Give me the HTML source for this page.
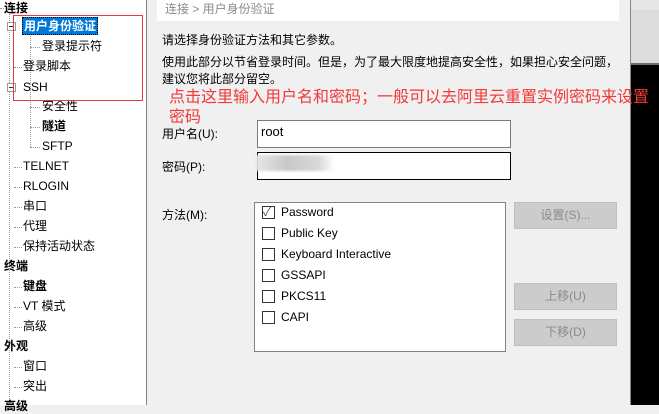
<!DOCTYPE html>
<html><head><meta charset="utf-8"><style>
*{margin:0;padding:0;box-sizing:border-box}
body{width:659px;height:405px;overflow:hidden;background:#f0f0f0;font-family:"Liberation Sans","Microsoft YaHei","Noto Sans CJK SC",sans-serif;font-size:12px;color:#000;position:relative}
.a{position:absolute;white-space:nowrap}
#left{position:absolute;left:0;top:0;width:147px;height:405px;background:#fff;border-right:1px solid #828282}
.t{position:absolute;white-space:nowrap;font-size:12px;line-height:16px}
.dh{position:absolute;border-top:1px dotted #999;height:0}
.dv{position:absolute;border-left:1px dotted #999;width:0}
.pm{position:absolute;width:9px;height:9px;border:1px solid #999;background:#fff}
.pm:after{content:"";position:absolute;left:1px;top:3px;width:5px;height:1px;background:#333}
.inp{position:absolute;background:#fff;border:1px solid #7a7a7a}
.cb{position:absolute;width:13px;height:13px;border:1px solid #333;background:#fff}
.btn{position:absolute;width:103px;height:27px;background:#ccc;border:1px solid #bfbfbf;color:#8a8a8a;text-align:center;line-height:25px;font-size:12px}
.red{color:#f03a3a;font-size:16px;line-height:20px;z-index:5}
</style></head><body>
<div id="left">
<div class="dv" style="left:9px;top:14px;height:391px"></div>
<div class="dh" style="left:0;top:8px;width:4px"></div>
<div class="t" style="left:4px;top:0px;font-weight:bold">连接</div>
<div class="dv" style="left:30px;top:32px;height:115px"></div>
<div class="pm" style="left:7px;top:22px"></div>
<div class="a" style="left:22px;top:17px;width:76px;height:18px;background:#0078d7;border:1px dotted #000"></div>
<div class="t" style="left:24px;top:18px;color:#fff;font-weight:bold">用户身份验证</div>
<div class="dh" style="left:30px;top:47px;width:10px"></div>
<div class="t" style="left:42px;top:38px">登录提示符</div>
<div class="dh" style="left:14px;top:67px;width:8px"></div>
<div class="t" style="left:23px;top:58px">登录脚本</div>
<div class="pm" style="left:7px;top:83px"></div>
<div class="t" style="left:23px;top:79px">SSH</div>
<div class="dh" style="left:30px;top:107px;width:10px"></div>
<div class="t" style="left:42px;top:98px">安全性</div>
<div class="dh" style="left:30px;top:127px;width:10px"></div>
<div class="t" style="left:42px;top:118px;font-weight:bold">隧道</div>
<div class="dh" style="left:30px;top:147px;width:10px"></div>
<div class="t" style="left:42px;top:138px">SFTP</div>
<div class="dh" style="left:14px;top:167px;width:8px"></div><div class="t" style="left:23px;top:158px">TELNET</div>
<div class="dh" style="left:14px;top:187px;width:8px"></div><div class="t" style="left:23px;top:178px">RLOGIN</div>
<div class="dh" style="left:14px;top:207px;width:8px"></div><div class="t" style="left:23px;top:198px">串口</div>
<div class="dh" style="left:14px;top:227px;width:8px"></div><div class="t" style="left:23px;top:218px">代理</div>
<div class="dh" style="left:14px;top:247px;width:8px"></div><div class="t" style="left:23px;top:238px">保持活动状态</div>
<div class="t" style="left:4px;top:258px;font-weight:bold">终端</div>
<div class="dh" style="left:14px;top:287px;width:8px"></div><div class="t" style="left:23px;top:278px;font-weight:bold">键盘</div>
<div class="dh" style="left:14px;top:307px;width:8px"></div><div class="t" style="left:23px;top:298px">VT 模式</div>
<div class="dh" style="left:14px;top:327px;width:8px"></div><div class="t" style="left:23px;top:318px">高级</div>
<div class="t" style="left:4px;top:338px;font-weight:bold">外观</div>
<div class="dh" style="left:14px;top:367px;width:8px"></div><div class="t" style="left:23px;top:358px">窗口</div>
<div class="dh" style="left:14px;top:387px;width:8px"></div><div class="t" style="left:23px;top:378px">突出</div>
<div class="t" style="left:4px;top:398px;font-weight:bold">高级</div>
<div class="a" style="left:13px;top:15px;width:130px;height:86px;border:1px solid #e83a3a"></div>
</div>
<div class="a" style="left:157px;top:0;width:462px;height:21px;background:#fff"></div>
<div class="a" style="left:165px;top:0;color:#8a8a8a;font-size:12px">连接 &gt; 用户身份验证</div>
<div class="a" style="left:162px;top:31px">请选择身份验证方法和其它参数。</div>
<div class="a" style="left:162px;top:53px">使用此部分以节省登录时间。但是，为了最大限度地提高安全性，如果担心安全问题，</div>
<div class="a" style="left:162px;top:70px">建议您将此部分留空。</div>
<div class="a" style="left:631px;top:0;width:28px;height:10px;background:#e6e6e6"></div>
<div class="a" style="left:630px;top:0;width:1px;height:405px;background:#888"></div>
<div class="a" style="left:631px;top:10px;width:28px;height:53px;background:#dcdcdc"></div>
<div class="a" style="left:631px;top:63px;width:28px;height:2px;background:#6a7080"></div>
<div class="a" style="left:631px;top:65px;width:28px;height:340px;background:#000"></div>
<div class="a red" style="left:169px;top:88px">点击这里输入用户名和密码；一般可以去阿里云重置实例密码来设置</div>
<div class="a red" style="left:169px;top:108px">密码</div>
<div class="a" style="left:162px;top:125px">用户名(U):</div>
<div class="inp" style="left:257px;top:120px;width:254px;height:28px"></div>
<div class="a" style="left:261px;top:124px;font-size:13px">root</div>
<div class="a" style="left:162px;top:158px">密码(P):</div>
<div class="inp" style="left:257px;top:152px;width:254px;height:28px;border-color:#000"></div>
<div class="a" style="left:256px;top:155px;width:78px;height:16px;background:linear-gradient(90deg,#e6e6e6,#c8c8c8 40%,#d8d8d8 80%,#fff);filter:blur(1px)"></div>
<div class="a" style="left:162px;top:206px">方法(M):</div>
<div class="a" style="left:254px;top:202px;width:252px;height:150px;background:#fff;border:1px solid #828282"></div>
<div class="cb" style="left:262px;top:206px"></div><div class="a" style="left:263px;top:203px;color:#555;font-size:12px">✓</div>
<div class="a" style="left:281px;top:205px">Password</div>
<div class="cb" style="left:262px;top:227px"></div><div class="a" style="left:281px;top:226px">Public Key</div>
<div class="cb" style="left:262px;top:248px"></div><div class="a" style="left:281px;top:247px">Keyboard Interactive</div>
<div class="cb" style="left:262px;top:269px"></div><div class="a" style="left:281px;top:268px">GSSAPI</div>
<div class="cb" style="left:262px;top:290px"></div><div class="a" style="left:281px;top:289px">PKCS11</div>
<div class="cb" style="left:262px;top:311px"></div><div class="a" style="left:281px;top:310px">CAPI</div>
<div class="btn" style="left:514px;top:202px">设置(S)...</div>
<div class="btn" style="left:514px;top:283px">上移(U)</div>
<div class="btn" style="left:514px;top:319px">下移(D)</div>
</body></html>
